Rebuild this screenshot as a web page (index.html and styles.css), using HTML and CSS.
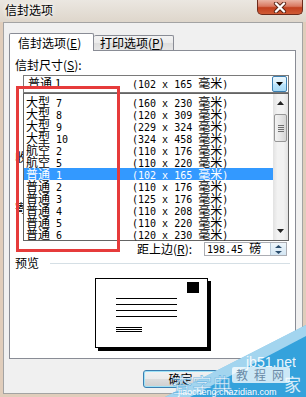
FILE: index.html
```html
<!DOCTYPE html>
<html lang="zh-CN">
<head>
  <meta charset="UTF-8">
  <meta name="viewport" content="width=device-width, initial-scale=1.0">
  <title>信封选项</title>
  <link rel="stylesheet" href="styles.css">
</head>
<body>
  <div class="titlebar">
    <div class="title">信封选项</div>
    <div class="close">
      <svg width="14" height="11" viewBox="0 0 14 11">
        <path d="M3 1.5 L11 9.5 M11 1.5 L3 9.5" stroke="#5a2416" stroke-width="4.2" stroke-linecap="round"/>
        <path d="M3 1.5 L11 9.5 M11 1.5 L3 9.5" stroke="#fff" stroke-width="2.4" stroke-linecap="round"/>
      </svg>
    </div>
  </div>

  <div class="client">
    <div class="tabs">
      <div class="tab tab-active">信封选项(<u>E</u>)</div>
      <div class="tab tab-idle">打印选项(<u>P</u>)</div>
    </div>

    <div class="panel">
      <div class="field-label">信封尺寸(<u>S</u>):</div>

      <div class="combo">
        <div class="combo-value">
          <span class="name">普通 1</span>
          <span class="dim mono">(102 x 165 <span class="c">毫米</span>)</span>
        </div>
        <div class="combo-btn">
          <svg width="7" height="4" viewBox="0 0 7 4"><polygon points="0,0 7,0 3.5,4" fill="#000"/></svg>
        </div>

        <div class="dropdown">
          <div class="items">
            <div class="row"><span class="name"><span class="c">大型</span> 7</span><span>(160 x 230 <span class="c">毫米</span>)</span></div>
            <div class="row"><span class="name"><span class="c">大型</span> 8</span><span>(120 x 309 <span class="c">毫米</span>)</span></div>
            <div class="row"><span class="name"><span class="c">大型</span> 9</span><span>(229 x 324 <span class="c">毫米</span>)</span></div>
            <div class="row"><span class="name"><span class="c">大型</span> 10</span><span>(324 x 458 <span class="c">毫米</span>)</span></div>
            <div class="row"><span class="name"><span class="c">航空</span> 2</span><span>(110 x 176 <span class="c">毫米</span>)</span></div>
            <div class="row"><span class="name"><span class="c">航空</span> 5</span><span>(110 x 220 <span class="c">毫米</span>)</span></div>
            <div class="row sel"><span class="name"><span class="c">普通</span> 1</span><span>(102 x 165 <span class="c">毫米</span>)</span></div>
            <div class="row"><span class="name"><span class="c">普通</span> 2</span><span>(110 x 176 <span class="c">毫米</span>)</span></div>
            <div class="row"><span class="name"><span class="c">普通</span> 3</span><span>(125 x 176 <span class="c">毫米</span>)</span></div>
            <div class="row"><span class="name"><span class="c">普通</span> 4</span><span>(110 x 208 <span class="c">毫米</span>)</span></div>
            <div class="row"><span class="name"><span class="c">普通</span> 5</span><span>(110 x 220 <span class="c">毫米</span>)</span></div>
            <div class="row"><span class="name"><span class="c">普通</span> 6</span><span>(120 x 230 <span class="c">毫米</span>)</span></div>
          </div>
          <div class="scroll">
            <div class="sb-arrow">
              <svg width="7" height="4" viewBox="0 0 7 4"><polygon points="0,4 7,4 3.5,0" fill="#222"/></svg>
            </div>
            <div class="thumb">
              <i></i><i></i><i></i><i></i>
            </div>
            <div class="sb-fill"></div>
            <div class="sb-arrow">
              <svg width="7" height="4" viewBox="0 0 7 4"><polygon points="0,0 7,0 3.5,4" fill="#222"/></svg>
            </div>
          </div>
        </div>
      </div>

      <div class="addr addr-to">收信人地址</div>
      <div class="addr addr-from">寄信人地址</div>

      <div class="offset-row">
        <span class="offset-label">距上边(<u>R</u>):</span>
        <div class="spin-input">
          <span class="mono">198.45 <span class="c">磅</span></span>
          <div class="spin">
            <svg width="7" height="3" viewBox="0 0 7 3"><polygon points="0,3 7,3 3.5,0" fill="#2a4d6e"/></svg>
            <svg width="7" height="3" viewBox="0 0 7 3"><polygon points="0,0 7,0 3.5,3" fill="#2a4d6e"/></svg>
          </div>
        </div>
      </div>

      <div class="preview-head">
        <span>预览</span>
        <div class="rule"></div>
      </div>

      <div class="envelope">
        <div class="stamp"></div>
        <div class="addr-lines">
          <div class="line"></div>
          <div class="line"></div>
          <div class="line"></div>
          <div class="line"></div>
        </div>
        <div class="return-lines">
          <div class="line"></div>
          <div class="line"></div>
          <div class="line"></div>
        </div>
      </div>
    </div>

    <div class="buttons">
      <div class="btn btn-default">确定</div>
      <div class="btn">取消</div>
    </div>
  </div>

  <!-- annotation box drawn over the screenshot -->
  <div class="mark"></div>

  <!-- site watermark in the corner -->
  <svg class="watermark" width="156" height="77" viewBox="0 0 156 77">
    <polygon points="156,5 156,77 15,77" fill="#34a2dc"/>
    <polygon points="15,77 156,5 156,16 40,77" fill="#ffffff" opacity="0.55"/>
    <text x="96" y="47" font-family="Liberation Sans, sans-serif" font-size="14" fill="#ffffff" opacity="0.9">jb51.net</text>
    <rect x="82" y="47" width="58" height="16" rx="2" fill="#ffffff" opacity="0.75"/>
    <text x="86" y="60" font-family="Noto Sans CJK SC, sans-serif" font-size="12" fill="#6a8aa6" letter-spacing="6">教程网</text>
    <text x="22" y="73" font-family="Noto Sans CJK SC, sans-serif" font-size="20" fill="#ffffff" stroke="#5aaee0" stroke-width="0.6" opacity="0.85">查字典</text>
    <text x="134" y="71" font-family="Noto Sans CJK SC, sans-serif" font-size="17" fill="#ffffff" opacity="0.8">家</text>
    <text x="28" y="75" font-family="Liberation Sans, sans-serif" font-size="9" fill="#ffffff">jiaocheng.chazidian.com</text>
  </svg>
</body>
</html>
```

FILE: styles.css
```css
body {
  margin: 0;
  width: 306px;
  height: 397px;
  overflow: hidden;
  position: relative;
  background: #e0cdbb;
  font-family: "Noto Sans CJK SC", "Noto Sans", sans-serif;
  font-size: 12px;
  color: #000;
}
u {
  text-decoration: underline;
}
.mono {
  font-family: "DejaVu Sans Mono", monospace;
  font-size: 10px;
  white-space: pre;
}
.c {
  font-family: "Noto Sans CJK SC", sans-serif;
  font-size: 12px;
}

/* title bar */
.titlebar {
  height: 22px;
  display: flex;
  justify-content: space-between;
  background: linear-gradient(180deg, #ebe7e1 0%, #ded6cb 100%);
}
.title {
  padding: 2px 0 0 5px;
  line-height: 16px;
  text-shadow: 0 0 5px #fff, 0 0 5px #fff;
}
.close {
  width: 46px;
  height: 15px;
  margin-right: 3px;
  box-sizing: border-box;
  border: 1px solid #6d2a1b;
  border-top: none;
  border-radius: 0 0 5px 5px;
  background: linear-gradient(180deg, #eab4a4 0%, #d97860 45%, #c2401f 55%, #d05b36 100%);
  display: flex;
  align-items: center;
  justify-content: center;
}

/* dialog body */
.client {
  margin: 0 3px;
  height: 372px;
  box-sizing: border-box;
  border: 1px solid #a3a3a3;
  background: #f0f0f0;
}
.tabs {
  display: flex;
  align-items: flex-end;
  height: 17px;
  margin: 10px 0 0 5px;
}
.tab {
  box-sizing: border-box;
  border: 1px solid #898c95;
  border-bottom: none;
  border-radius: 2px 2px 0 0;
  line-height: 14px;
}
.tab-active {
  width: 85px;
  height: 18px;
  margin-bottom: -1px;
  padding: 2px 0 0 8px;
  background: #fff;
  position: relative;
  z-index: 1;
}
.tab-idle {
  width: 80px;
  height: 15px;
  padding-left: 6px;
  border-left: none;
  background: linear-gradient(180deg, #f3f3f3 0%, #ebebeb 50%, #dddddd 50%, #e6e6e6 100%);
}
.panel {
  margin-left: 5px;
  width: 287px;
  height: 309px;
  box-sizing: border-box;
  border: 1px solid #898c95;
  background: #fff;
}
.field-label {
  margin: 7px 0 0 5px;
  line-height: 14px;
}

/* combo box and its open list */
.combo {
  position: relative;
  margin: 3px 0 0 13px;
  width: 266px;
  height: 18px;
  box-sizing: border-box;
  border: 1px solid #7a7a7a;
  display: flex;
  align-items: center;
}
.combo-value {
  flex: 1;
  display: flex;
  padding-left: 4px;
  line-height: 14px;
}
.combo-value .name {
  width: 104px;
}
.combo-btn {
  width: 15px;
  height: 16px;
  margin-right: 1px;
  box-sizing: border-box;
  border: 1px solid #3c7fb1;
  border-radius: 2px;
  background: linear-gradient(180deg, #eaf6fd 0%, #d9f0fc 45%, #bee6fd 50%, #a7d9f5 100%);
  display: flex;
  align-items: center;
  justify-content: center;
}
.dropdown {
  position: absolute;
  top: 17px;
  left: -1px;
  width: 266px;
  height: 148px;
  box-sizing: border-box;
  border: 1px solid #646464;
  background: #fff;
  display: flex;
  z-index: 2;
}
.items {
  flex: 1;
  padding-top: 2px;
}
.row {
  display: flex;
  height: 12px;
  font-family: "DejaVu Sans Mono", monospace;
  font-size: 10px;
  line-height: 12px;
  white-space: pre;
}
.row .c {
  line-height: 12px;
}
.row .name {
  width: 108px;
  padding-left: 2px;
  box-sizing: border-box;
}
.row.sel {
  background: #3399ff;
  color: #fff;
}
.scroll {
  width: 15px;
  display: flex;
  flex-direction: column;
  align-items: center;
  background: linear-gradient(90deg, #e2e2e2 0%, #f2f2f2 30%, #f2f2f2 70%, #e2e2e2 100%);
}
.sb-arrow {
  height: 18px;
  display: flex;
  align-items: center;
  justify-content: center;
}
.thumb {
  margin-top: 2px;
  width: 13px;
  height: 28px;
  box-sizing: border-box;
  border: 1px solid #979797;
  border-radius: 2px;
  background: linear-gradient(90deg, #f3f3f3 0%, #e6e6e6 50%, #d6d6d6 100%);
  display: flex;
  flex-direction: column;
  align-items: center;
  justify-content: center;
  gap: 1px;
}
.thumb i {
  display: block;
  width: 6px;
  height: 1px;
  background: #6f6f6f;
}
.sb-fill {
  flex: 1;
}

/* fields behind the list */
.addr {
  margin-left: 5px;
  line-height: 14px;
}
.addr-to {
  margin-top: 57px;
}
.addr-from {
  margin-top: 37px;
}
.offset-row {
  display: flex;
  align-items: center;
  height: 14px;
  margin: 27px 0 0 127px;
}
.offset-label {
  width: 67px;
  line-height: 14px;
}
.spin-input {
  width: 83px;
  height: 14px;
  box-sizing: border-box;
  border: 1px solid #abadb3;
  padding-left: 2px;
  display: flex;
  align-items: center;
  line-height: 12px;
}
.spin {
  margin-left: auto;
  width: 15px;
  height: 12px;
  display: flex;
  flex-direction: column;
  align-items: center;
  justify-content: space-around;
  background: linear-gradient(180deg, #eef6fb 0%, #d4e6f3 100%);
  border-left: 1px solid #b7c9d8;
}

/* preview */
.preview-head {
  display: flex;
  align-items: center;
  height: 14px;
  line-height: 14px;
  margin: 0 5px;
}
.rule {
  flex: 1;
  margin-left: 11px;
  border-top: 1px solid #d5dfe5;
}
.envelope {
  margin: 8px 0 0 85px;
  width: 113px;
  height: 70px;
  box-sizing: border-box;
  border: 1px solid #000;
  box-shadow: 3px 3px 0 #000;
  background: #fff;
  display: flex;
  flex-direction: column;
}
.stamp {
  align-self: flex-end;
  width: 12px;
  height: 11px;
  margin: 3px 8px 0 0;
  background: #000;
}
.addr-lines {
  display: flex;
  flex-direction: column;
  gap: 5px;
  width: 61px;
  margin: 5px 0 0 20px;
}
.return-lines {
  display: flex;
  flex-direction: column;
  gap: 1px;
  width: 26px;
  margin: 10px 0 0 20px;
}
.line {
  height: 1px;
  background: #000;
}

/* buttons */
.buttons {
  display: flex;
  justify-content: flex-end;
  gap: 6px;
  margin-top: 11px;
  padding-right: 3px;
}
.btn {
  width: 75px;
  height: 18px;
  box-sizing: border-box;
  border: 1px solid #707070;
  border-radius: 3px;
  background: linear-gradient(180deg, #f2f2f2 0%, #ebebeb 50%, #dddddd 50%, #cfcfcf 100%);
  text-align: center;
  line-height: 16px;
}
.btn-default {
  border-color: #3c7fb1;
  box-shadow: inset 0 0 0 1px #9ee2f7;
}

/* overlays */
.mark {
  position: absolute;
  left: 16px;
  top: 86px;
  width: 104px;
  height: 166px;
  box-sizing: border-box;
  border: 3px solid #e63b3b;
  z-index: 3;
}
.watermark {
  position: absolute;
  left: 150px;
  top: 320px;
  z-index: 4;
}
```
